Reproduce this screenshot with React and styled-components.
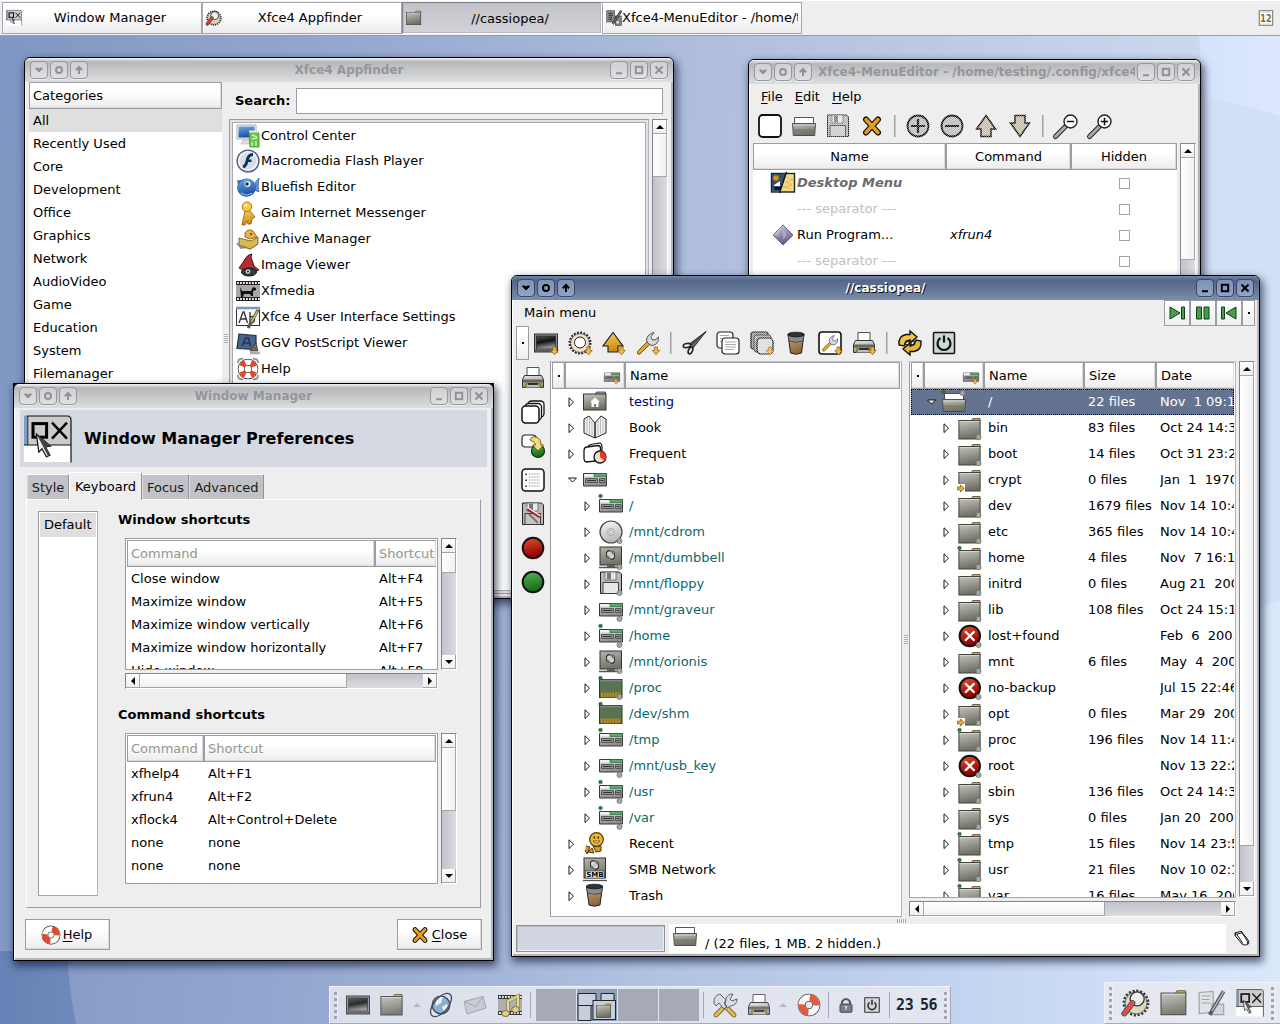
import React from "react";
import styled, { createGlobalStyle, css } from "styled-components";

const Global = createGlobalStyle`
  html, body { margin: 0; padding: 0; width: 1280px; height: 1024px; overflow: hidden; }
  *, *::before, *::after { box-sizing: border-box; }
  body { font-family: "DejaVu Sans", sans-serif; font-size: 13px; color: #000; }
  svg { display: block; flex: none; overflow: visible; }
`;

/* ---------- palette ---------- */
const line = "#9c9ca3";
const face = "#eeeeee";
const raised = "linear-gradient(#ffffff, #ffffff 35%, #ececec)";

/* ---------- gradients shared by the drawings ---------- */
const DefsSvg = styled.svg`position: absolute; width: 0; height: 0;`;
const stops = {
  folder: ["#c4c4bc", "#6f6f66"], steel: ["#e8e8e8", "#8c8c8c"], gold: ["#f8d468", "#c88a10"],
  term: ["#555", "#111", "#999"], red: ["#e8502c", "#8e0000"], green: ["#5cb858", "#186818"],
  blue: ["#6ea8e8", "#1c50a0"], tan: ["#d0a878", "#8a6440"], purple: ["#d0cce4", "#625c88"],
  disc: ["#f8f8f8", "#b8b8b8"], body: ["#b4b4aa", "#74746a"],
};
const Defs = () => (
  <DefsSvg>
    <defs>
      {Object.entries(stops).map(([id, cs]) => (
        <linearGradient key={id} id={id} x1="0" y1="0" x2="0.25" y2="1">
          {cs.map((c, i) => <stop key={c} offset={i / (cs.length - 1)} stopColor={c} />)}
        </linearGradient>
      ))}
      <pattern id="dither" width="2" height="2" patternUnits="userSpaceOnUse">
        <path d="M0 0h1v1h-1zM1 1h1v1h-1z" fill="#eee" />
      </pattern>
    </defs>
  </DefsSvg>
);

/* ---------- small drawing pieces ---------- */
const Gear = ({ fill = "#f0e0cc" }) => (
  <>
    <circle cx="12" cy="12" r="10.2" fill="none" stroke="#222" strokeWidth="2.6" strokeDasharray="1.8 1.4" />
    <circle cx="12" cy="12" r="9.4" fill={fill} stroke="#443c30" strokeWidth=".7" />
  </>
);
const DropMark = ({ x = 20, y = 20 }) => (
  <path transform={`translate(${x} ${y})`} d="M-1.6 -4h3.2v3.4h2.2l-3.8 4.4l-3.8 -4.4h2.2z" fill="#eeb84c" stroke="#8a5c08" strokeWidth=".7" />
);
const Buoy = () => (
  <>
    <circle cx="12" cy="12" r="7.3" fill="none" stroke="#333" strokeWidth="8" />
    <circle cx="12" cy="12" r="7.3" fill="none" stroke="#fff" strokeWidth="6.6" />
    <circle cx="12" cy="12" r="7.3" fill="none" stroke="#e04a24" strokeWidth="6.6" strokeDasharray="11.5 11.45" strokeDashoffset="-12" />
  </>
);
const FolderShape = () => (
  <>
    <path d="M13 4l1.500 -2.500h7.500v3h-9z" fill="#d8a850" stroke="#5c4818" strokeWidth=".8" />
    <rect x=".9" y="3.500" width="21.200" height="18.500" fill="url(#folder)" stroke="#42423c" strokeWidth="1" />
    <path d="M1.500 4.500h20" stroke="#ddd" strokeWidth=".8" />
  </>
);
const OpenShape = () => (
  <>
    <path d="M2.500 11v-7.500h19v7.500" fill="#fff" stroke="#444" strokeWidth=".9" />
    <path d="M.500 9.500h23l-.800 12h-21.400z" fill="url(#folder)" stroke="#44443c" strokeWidth=".9" />
    <path d="M1 11h22" stroke="#ccc" />
    <path d="M1.500 15h21v6h-21z" fill="#77776c" opacity=".6" />
  </>
);
const FloppyShape = ({ label = "#e6e6ea" }) => (
  <>
    <path d="M1.500 1h19l2 2v19.500h-21z" fill="#b8b8b8" stroke="#222" />
    <path d="M6 1h11v8h-11z" fill="#e8e8e8" stroke="#555" strokeWidth=".7" />
    <path d="M8 1.500h4v7h-4z" fill="#777" />
    <path d="M4 11.500h15.500v11h-15.500z" fill={label} stroke="#333" strokeWidth=".9" />
  </>
);
const PrinterShape = () => (
  <>
    <path d="M6 10v-8.500h12v8.500" fill="#fff" stroke="#555" />
    <path d="M3.500 9.500h17l2 4v8h-21v-8z" fill="url(#steel)" stroke="#333" />
    <path d="M2 13.500h20v3h-20z" fill="#666" />
    <path d="M5 21.500v-4h14v4" fill="#b8bcc4" stroke="#96802c" strokeWidth="2" />
    <path d="M7 18h10" stroke="#111" strokeWidth="1.500" />
  </>
);
const TermShape = () => (
  <>
    <rect x=".5" y="3" width="23" height="18" fill="#8a9098" stroke="#333" />
    <rect x="2.500" y="5" width="19" height="13" fill="url(#term)" stroke="#222" strokeWidth=".7" />
    <path d="M1 19.800h22" stroke="#555" strokeWidth="1.500" />
  </>
);
const WrenchShape = () => (
  <>
    <path d="M1.500 20.500l9.500 -9.500l2.500 2.500l-9.500 9.500q-3 1 -2.500 -2.500z" fill="#e6a836" stroke="#6a4808" />
    <path d="M11 11q-1.500 -3 1 -6q2.500 -3 6 -3.500l-3 4l1 3l3 .5l3.500 -3q.5 5 -3 7.500q-3 1.500 -5.500 .5z" fill="#d4d8dc" stroke="#444" strokeWidth=".9" />
  </>
);
const CrossShape = () => (
  <>
    <path d="M6 5.500l12 13M18 5.500l-12 13" stroke="#1c1400" strokeWidth="6" strokeLinecap="round" />
    <path d="M6 5.500l12 13M18 5.500l-12 13" stroke="#e6a020" strokeWidth="3.400" strokeLinecap="round" />
  </>
);
const Lens = ({ plus }) => (
  <>
    <path d="M1.500 22.500l9.500 -9.500" stroke="#222" strokeWidth="5" strokeLinecap="round" />
    <path d="M1.500 22.500l9.500 -9.500" stroke="#aaa" strokeWidth="3" strokeLinecap="round" />
    <circle cx="16.500" cy="7.500" r="6.500" fill="#fff" stroke="#222" strokeWidth="1.400" />
    <path d={plus ? "M12.800 7.500h7.400M16.500 3.800v7.400" : "M12.800 7.500h7.400"} stroke="#111" strokeWidth="1.600" />
  </>
);
const TrashShape = () => (
  <>
    <path d="M4 3h16l-2.500 19q-5.500 2.500 -11 0z" fill="url(#tan)" stroke="#222" />
    <path d="M4 3h16l-1 7q-7 2.500 -14 0z" fill="#888c90" stroke="#333" strokeWidth=".7" />
    <ellipse cx="12" cy="3.500" rx="8" ry="2.300" fill="#333" stroke="#111" strokeWidth=".8" />
  </>
);
const DriveShape = () => (
  <>
    <path d="M.500 5.500h23v12.500h-23z" fill="url(#steel)" stroke="#3a3a3a" />
    <path d="M1 6h10v2.500h-10z" fill="#f2f2f2" />
    <path d="M11 5.500h12.500v3h-12.500z" fill="#58ac68" stroke="#2c6038" strokeWidth=".6" />
    <path d="M2.500 10.500h12v4h-12zM16.500 10.500h5.500v4h-5.500z" fill="#949494" stroke="#444" strokeWidth=".8" />
    <path d="M4 12.500h9M17.500 12.500h3" stroke="#333" />
  </>
);
const Atom = () => (
  <>
    <ellipse cx="11.5" cy="9" rx="5" ry="3" transform="rotate(50 11.5 9)" fill="#ccc" stroke="#222" strokeWidth=".8" />
    <ellipse cx="11.5" cy="9" rx="5" ry="3" transform="rotate(-50 11.5 9)" fill="none" stroke="#eee" strokeWidth=".9" />
    <rect x="7.500" y="5" width="8" height="8" rx="2" fill="none" stroke="#222" strokeWidth=".8" />
  </>
);
const ScreenShape = () => (
  <>
    <rect x="1" y="1" width="21.500" height="18" fill="url(#body)" stroke="#333" />
    <Atom />
    <path d="M0 21.500h22M8 20h8" stroke="#555" strokeWidth="1.300" />
  </>
);
const WmShape = () => (
  <>
    <path d="M0 .3h21.500q2 0 2 2v21.200h-23.500z" fill="#fff" />
    <path d="M0 .3h21.500q2 0 2 2v12.700h-23.500z" fill="#cccacc" />
    <path d="M0 .3h1.600v14.700h-1.600z" fill="#7c9cc4" />
    <path d="M1.900 .5v14.500" stroke="#222" strokeWidth=".5" />
    <path d="M1.600 .5h20q1.900 0 1.900 2v21.200M0 15h23.500" fill="none" stroke="#111" strokeWidth=".6" />
    <rect x="4.500" y="4.300" width="6.800" height="6.800" fill="none" stroke="#000" strokeWidth="1.500" />
    <path d="M14 3.800l7.500 8M21.500 3.800l-7.500 8" stroke="#000" strokeWidth="1.200" />
    <path d="M6.200 9.500l7 6l-2.500 .4l2.300 4.200l-1.800 .8l-2.200 -4l-1.600 1.700z" fill="#eee" stroke="#111" strokeWidth=".6" />
    <path d="M6.400 9.700l6.800 5.800l-2.500 .4l2.300 4.200l-1 .4z" fill="#444" />
  </>
);
const PagesShape = () => (
  <>
    <rect x="1" y="1" width="16" height="16" rx="3" fill="#fff" stroke="#222" strokeWidth="1.200" />
    <path d="M4 4.500h9M4 7.500h2M4 10.500h2" stroke="#aaa" />
    <rect x="6" y="7" width="17" height="16" rx="3" fill="#fff" stroke="#222" strokeWidth="1.200" />
    <path d="M9 11h11M9 13.500h11M9 16h11M9 18.500h9" stroke="#aaa" />
  </>
);
const FilmShape = () => (
  <>
    <rect x="0" y="2" width="24" height="20" fill="#222" />
    <rect x="0" y="6" width="24" height="12" fill="#a8a8a8" />
    <path d="M1 4h23M1 20h23" stroke="#eee" strokeWidth="2" strokeDasharray="1.8 1.200" />
  </>
);
const Disabled = ({ children }) => (
  <>
    {children}
    <rect x="-1" y="-1" width="26" height="26" fill="url(#dither)" opacity=".45" />
  </>
);

/* ---------- icon set, 24 x 24 ---------- */
const drawings = {
  wm: <WmShape />,
  finder: <>
    <Gear fill="#dcd8b8" />
    <circle cx="13" cy="8.500" r="6" fill="#eee" stroke="#222" strokeWidth="1.200" />
    <path d="M9 12l-7 9" stroke="#333" strokeWidth="5" strokeLinecap="round" />
    <path d="M9 12l-7 9" stroke="#e03840" strokeWidth="3.600" strokeLinecap="round" />
  </>,
  folder: <FolderShape />,
  open: <OpenShape />,
  menued: <>
    <rect x="1" y="1" width="12" height="17" fill="#888" stroke="#555" />
    <path d="M4 5h6M4 8h6M4 11h5M4 14h5" stroke="#333" strokeWidth="1.500" />
    <rect x="14" y="9" width="9" height="14" fill="#888" stroke="#444" />
    <path d="M23 1l-13 20" stroke="#222" strokeWidth="3.500" />
    <path d="M23 1l-13 20" stroke="#ccc" strokeWidth="1" />
    <path d="M15 16h5v5h-5z" fill="#eee" stroke="#555" />
  </>,
  calendar: <>
    <rect x="2" y="1" width="20" height="22" fill="#fff" stroke="#888" strokeWidth="1.800" />
    <path d="M5 3.500h14M5 20.800h14" stroke="#aaa" strokeDasharray="1.500 1" />
    <text x="12" y="18.500" textAnchor="middle" fontSize="17" textLength="17" lengthAdjust="spacingAndGlyphs" fontWeight="bold" fontFamily="DejaVu Sans, sans-serif" fill="#8a6a20">12</text>
  </>,
  control: <>
    <path d="M1 1h19v14h-19z" fill="#f4f4f4" stroke="#aaa" />
    <path d="M2.500 2.500h16v11h-16z" fill="url(#blue)" />
    <path d="M7 16h8l2 4h-12z" fill="#ddd" stroke="#bbb" strokeWidth=".6" />
    <path d="M13 8h9l1 2v13h-9z" fill="#68c84c" stroke="#3c8c28" strokeWidth=".8" />
    <path d="M16 11l5 2M15.500 15l6 -1M16 18v4M20 17v5" stroke="#c8f0b8" strokeWidth="1.400" />
    <path d="M13 7.500h10" stroke="#eee" strokeWidth="2" />
  </>,
  flash: <>
    <circle cx="12" cy="12" r="10.800" fill="#d8dee8" stroke="#4c6484" strokeWidth="1.600" />
    <circle cx="12" cy="12" r="9.300" fill="none" stroke="#f4f6fa" strokeWidth="1.600" />
    <path d="M17 5.500q-5 0 -6 6.500q-1 5 -4 6" fill="none" stroke="#10305c" strokeWidth="3" />
    <path d="M10.500 11.800h5" stroke="#10305c" strokeWidth="2.400" />
  </>,
  fish: <>
    <path d="M17 10l6 -7q-1.500 8 0 14q-4 -1 -6 -4z" fill="#5c94d4" stroke="#2c5c9c" strokeWidth=".7" />
    <ellipse cx="10.500" cy="12.500" rx="9.500" ry="9.200" fill="url(#blue)" />
    <path d="M1 5q3 1 7 -1l-6 6z" fill="#3c70b8" />
    <circle cx="11.500" cy="9" r="3" fill="#e8f0fa" /><circle cx="11" cy="9" r="1.700" fill="#123" />
    <path d="M5 18q6 4 11 0" stroke="#9cbce4" strokeWidth="1.200" fill="none" />
  </>,
  gaim: <>
    <path d="M9 10q5 -1 6 1l4 5l-3 2l-1 5h-3l-1 -3l-2 4h-3z" fill="url(#gold)" stroke="#9c6808" strokeWidth=".9" />
    <circle cx="11" cy="5.800" r="4.800" fill="#fcc83c" stroke="#a87008" strokeWidth=".9" />
    <circle cx="9.800" cy="4.300" r="1.600" fill="#fff0b0" />
  </>,
  archive: <>
    <path d="M3 20l12 3l8 -6l-10 -3z" fill="#bbb" opacity=".7" />
    <path d="M3 11l12 3l7 -4v7l-8 5l-11 -4z" fill="#d8b850" stroke="#6c5010" strokeWidth=".8" />
    <path d="M9 6q3 -5 8 -2l4 6l-7 2l-5 -2z" fill="#ecb040" stroke="#7c4c08" strokeWidth=".8" />
    <path d="M1 16l4 5l5 -1" fill="none" stroke="#888" strokeWidth="1.800" /><circle cx="15" cy="7" r="1" fill="#333" />
  </>,
  gnomeEye: <>
    <path d="M3 15q3 -4 6 -9q3 -5 7 -5l-1 3l3 9l5 4q-10 5 -20 -2z" fill="#b02c30" stroke="#480c10" strokeWidth=".9" />
    <ellipse cx="13" cy="19" rx="7.500" ry="4" fill="#333c40" stroke="#111" />
    <circle cx="12" cy="18.500" r="2.300" fill="#c8e0e8" /><circle cx="12" cy="18.500" r="1" fill="#111" />
  </>,
  film: <>
    <FilmShape />
    <path d="M4 8l2 4h9l2 -4l3 1v2l-3 1v5h-2l-1 -2h-6l-1 3h-2z" fill="#111" />
  </>,
  ui: <>
    <rect x=".5" y="3.500" width="23" height="17" fill="#f8f8f8" stroke="#333" />
    <path d="M0 3h24" stroke="#7898c4" strokeWidth="2.500" />
    <path d="M3 18l4 -11h1l3.500 11M4.500 14h5.500M14 7v11M14 12q5 -2 4.500 2.500q0 4 -4.500 3" fill="none" stroke="#333" strokeWidth="1.300" />
    <path d="M22 5l-10 18" stroke="#555" strokeWidth="3" /><path d="M21.500 6l-6 11" stroke="#d8c058" strokeWidth="1.500" />
  </>,
  ggv: <>
    <path d="M3 3l17 1.500v14l-19 -1z" fill="#46648c" stroke="#1c2c44" strokeWidth="1.200" />
    <path d="M6 15l3.500 -8h3l2 8M8 12h6" stroke="#22364e" strokeWidth="1.600" fill="none" />
    <path d="M17 15l3 -3l2 8h-8z" fill="#786450" stroke="#333" strokeWidth=".7" /><path d="M14 22h10" stroke="#aaa" strokeWidth="2.500" />
  </>,
  buoyBig: <>
    <path d="M2 6q0 -5 5 -4M22 6q0 -5 -5 -4M2 18q0 5 5 4M22 18q0 5 -5 4" stroke="#a09890" fill="none" strokeWidth="2" />
    <circle cx="12" cy="12" r="6.800" fill="none" stroke="#333" strokeWidth="7" />
    <circle cx="12" cy="12" r="6.800" fill="none" stroke="#fff" strokeWidth="5.600" />
    <circle cx="12" cy="12" r="6.800" fill="none" stroke="#e04a24" strokeWidth="5.600" strokeDasharray="5 5.680" strokeDashoffset="-2.800" />
  </>,
  buoy: <Buoy />,
  page: <rect x="1" y="1" width="22" height="22" rx="3.500" fill="#fff" stroke="#111" strokeWidth="1.800" />,
  floppyOff: <Disabled><FloppyShape label="#ccc" /></Disabled>,
  cross: <CrossShape />,
  plusOff: <Disabled><circle cx="12" cy="12" r="10.500" fill="#bcbcbc" stroke="#000" strokeWidth="1.800" /><path d="M5 12h14M12 5v14" stroke="#000" strokeWidth="2.200" /></Disabled>,
  minusOff: <Disabled><circle cx="12" cy="12" r="10.500" fill="#bcbcbc" stroke="#000" strokeWidth="1.800" /><path d="M5 12h14" stroke="#000" strokeWidth="2.200" /></Disabled>,
  upOff: <Disabled><path d="M12 1.500l9.500 13.500h-4.500v7.500h-10v-7.500h-4.500z" fill="#ccbc9c" stroke="#000" strokeWidth="1.500" /></Disabled>,
  downOff: <Disabled><path d="M12 22.500l9.500 -13.500h-4.500v-7.500h-10v7.500h-4.500z" fill="#ccbc9c" stroke="#000" strokeWidth="1.500" /></Disabled>,
  zoomOut: <Lens />, zoomIn: <Lens plus />,
  desktop: <>
    <rect x=".5" y="2.500" width="23" height="18.500" fill="#f4d98c" stroke="#222" strokeWidth="1.400" />
    <path d="M1 3h14l-6 17.500h-8z" fill="#34506c" />
    <circle cx="5" cy="7" r="2.800" fill="#d89010" /><path d="M3 14l6 -4v5h-6z" fill="#fff" />
    <path d="M3 16h8l-3 3h-4z" fill="#111" /><path d="M15.500 1l-7 21" stroke="#111" strokeWidth="1.400" />
    <path d="M15 6l7 3l-8 2l7 3l-9 2l8 2" stroke="#e0bc58" fill="none" />
  </>,
  diamond: <>
    <path d="M12 2l10 10l-10 10l-10 -10z" fill="url(#purple)" stroke="#4c4868" strokeWidth=".8" />
    <path d="M12 2l-10 10l5 1zM12 7l4 5l-4 5" fill="#fff" opacity=".25" />
  </>,
  term: <TermShape />,
  termDrop: <><TermShape /><DropMark x={20.5} /></>,
  gearDrop: <><Gear /><circle cx="12" cy="11.500" r="5.500" fill="#fff" stroke="#222" /><DropMark x={20.5} /></>,
  homeDrop: <><path d="M11 1.500l10 13.500h-5v6h-10v-6h-5z" fill="url(#gold)" stroke="#222" strokeWidth="1.200" /><DropMark x={19.5} /></>,
  wrenchDrop: <><WrenchShape /><DropMark /></>,
  scissors: <>
    <path d="M24 .5l-14 13.500l-2 -1.500z" fill="#555" stroke="#111" strokeWidth=".8" /><path d="M24 .5l-12.500 16l-2 -2" stroke="#111" fill="#666" strokeWidth=".8" />
    <ellipse cx="5" cy="14.500" rx="3.800" ry="2" transform="rotate(-8 5 14.500)" fill="none" stroke="#222" strokeWidth="1.600" />
    <ellipse cx="8.500" cy="19.500" rx="2" ry="3.600" transform="rotate(25 8.500 19.500)" fill="none" stroke="#222" strokeWidth="1.600" />
  </>,
  copy: <PagesShape />,
  pasteOff: <Disabled><rect x="1" y="1" width="17" height="17" rx="2" fill="#999" stroke="#000" strokeWidth="1.200" /><rect x="4" y="4" width="17" height="17" rx="2" fill="#aaa" stroke="#333" /><rect x="7" y="7" width="16" height="16" rx="4" fill="#ddd" stroke="#000" strokeWidth="1.200" /><DropMark x={20} /></Disabled>,
  trash: <TrashShape />,
  wrenchBox: <>
    <rect x="1" y="1" width="22" height="22" rx="3" fill="#fff" stroke="#111" strokeWidth="1.600" />
    <g transform="translate(3.500 3.500) scale(.72)"><WrenchShape /></g><DropMark x={20.5} />
  </>,
  printDrop: <><PrinterShape /><DropMark x={20.5} /></>,
  print: <PrinterShape />,
  sync: <>
    <path d="M1 14q-1 -9 7 -10.500h4v-3.500l7 6l-7 6v-3q-4 0 -6 6z" fill="#f0c448" stroke="#111" strokeWidth="1.400" />
    <path d="M23 10q1 9 -7 10.500h-4v3.500l-7 -6l7 -6v3q4 0 6 -6z" fill="#e8b438" stroke="#111" strokeWidth="1.400" />
    <circle cx="9.300" cy="12" r="2" fill="none" stroke="#222" strokeWidth="1.400" /><circle cx="14.700" cy="12" r="2" fill="none" stroke="#222" strokeWidth="1.400" />
  </>,
  power: <>
    <rect x="1.500" y="1.500" width="21" height="21" rx="1" fill="#cdd8d0" stroke="#111" strokeWidth="1.500" />
    <path d="M8.500 7a6.500 6.500 0 1 0 7 0M12 4.500v7" fill="none" stroke="#111" strokeWidth="2.200" />
  </>,
  stack: <>
    <rect x="7" y="1" width="16" height="16" rx="3.500" fill="#fff" stroke="#111" strokeWidth="1.300" />
    <rect x="4" y="3.500" width="16.500" height="16.500" rx="3.500" fill="#fff" stroke="#111" strokeWidth="1.300" />
    <rect x="1" y="6" width="17" height="17" rx="3.500" fill="#fff" stroke="#111" strokeWidth="1.500" />
  </>,
  goto: <>
    <rect x="1" y="1" width="14" height="12" rx="3" fill="#fff" stroke="#222" strokeWidth="1.200" />
    <circle cx="17" cy="17" r="6.500" fill="url(#green)" stroke="#0c300c" strokeWidth="1.200" />
    <path d="M9 6q1 -4 6 -3q5 1 5 8h2.500l-5.500 6l-5.500 -6h3q0 -3 -5.500 -5z" fill="#f4dc78" stroke="#6c5008" strokeWidth=".9" />
  </>,
  list: <>
    <rect x="1" y="1" width="22" height="22" rx="3.500" fill="#fff" stroke="#111" strokeWidth="1.500" />
    <path d="M8 6h11M8 9h11M8 12h11M8 15h11M8 18h11" stroke="#999" strokeDasharray="1 .6" />
    <path d="M5 5.500v1.500M5 11.500v1.500M5 17.500v1.500" stroke="#111" strokeWidth="1.400" />
  </>,
  saveEdit: <><FloppyShape label="#c4c4c4" /><path d="M8 12l9 9" stroke="#777" strokeWidth="2" /><path d="M6 6l13 8.500" stroke="#fff" strokeWidth="2.600" /><path d="M6 7l13 8.500" stroke="#b01820" strokeWidth="2" /></>,
  ballRed: <><circle cx="12" cy="12" r="10.300" fill="url(#red)" stroke="#111" strokeWidth="2" /></>,
  ballGreen: <><circle cx="12" cy="12" r="10.300" fill="url(#green)" stroke="#111" strokeWidth="2" /></>,
  globe: <>
    <circle cx="12" cy="12" r="8.800" fill="#86a8cc" stroke="#1c2c44" strokeWidth="1.200" />
    <path d="M6 7q4 -4 8 -3l-2 6l-5 3zM13 14l5 -3l1 4l-4 4z" fill="#eef4fa" />
    <ellipse cx="12" cy="12" rx="14" ry="7" transform="rotate(-50 12 12)" fill="none" stroke="#2c3848" strokeWidth="1.300" />
  </>,
  mail: <><path d="M1 8.500l19 -5l3 11.500l-19 6z" fill="#c4c8d0" stroke="#9a9ea6" /><path d="M1 8.500l12 5l7 -10" fill="none" stroke="#9a9ea6" /></>,
  music: <><FilmShape /><path d="M10 20v-12l10 -5v13" fill="none" stroke="#8c7828" strokeWidth="3.500" /><path d="M10 20v-12l10 -5v13" fill="none" stroke="#e8d888" strokeWidth="2" /><ellipse cx="7.500" cy="20.500" rx="3.800" ry="3" fill="#e0cc78" stroke="#6c5c20" /><ellipse cx="17.500" cy="16.500" rx="3.800" ry="3" fill="#e0cc78" stroke="#6c5c20" /></>,
  tools: <>
    <path d="M3 22l8 -8M13 14l8 8" stroke="#6c5010" strokeWidth="4.600" strokeLinecap="round" />
    <path d="M3 22l8 -8M13 14l8 8" stroke="#e8b848" strokeWidth="3" strokeLinecap="round" />
    <path d="M1 10q-1 -7 6 -9l6 6l-2 3l3 3l-3 3l-5 -6l-3 3zM13 6q1 -5 7 -5l-3 5l2 2l5 -2q0 6 -6 7l-4 2l-2 -3z" fill="#d8dce4" stroke="#444" strokeWidth=".9" />
  </>,
  lock: <><path d="M6 12v-5q6 -8 12 0v5" fill="none" stroke="#444" strokeWidth="3" /><rect x="3" y="10.500" width="18" height="12.500" rx="2" fill="#6c7078" stroke="#2c2c30" strokeWidth="1.400" /><path d="M12 14v5M10 14.500h4" stroke="#ddd" strokeWidth="2" /></>,
  powerSmall: <><rect x="1" y="1" width="22" height="22" rx="1" fill="#d0d4dc" stroke="#444" strokeWidth="2" /><path d="M8.500 8a6 6 0 1 0 7 0M12 4v8" fill="none" stroke="#222" strokeWidth="2.500" /></>,
  eraser: <path d="M3 5l8 -2l10 13q1 5 -3 5q-4 1 -6 -1l-9 -11zM3 5v4M11 3l1 2l-8 2M12 5l7 11q1 3 0 4M5 7l8 12" fill="#fff" stroke="#111" strokeWidth="1.300" />,
  driveDrop: <><g transform="translate(0 2)"><DriveShape /></g><DropMark x={18} y={20.5} /></>,
  editor: <><path d="M1 3l12 -1v18l-12 1z" fill="#e0e2e8" stroke="#999" /><path d="M12 13h10v9h-10z" fill="#d0d2d8" stroke="#999" /><path d="M3 6h8M3 9h7M3 12h8" stroke="#999" /><path d="M22 2l-12 20" stroke="#444" strokeWidth="3.200" /><path d="M22 2l-10 17" stroke="#bbb" /></>,
};
const Icon = ({ name, size = 24 }) => (
  <svg width={size} height={size} viewBox="0 0 24 24">{drawings[name]}</svg>
);

/* ---------- file tree icons, 26 x 26 with emblems ---------- */
const treeDrawings = {
  folder: <g transform="translate(1 2)"><FolderShape /></g>,
  open: <g transform="translate(1 1)"><OpenShape /></g>,
  homeFolder: <g transform="translate(1 3)"><path d="M12 3l1.500 -3h9v4" fill="#8ca8c8" stroke="#334" strokeWidth=".8" /><rect x=".5" y="2" width="22.500" height="16" fill="url(#folder)" stroke="#333" /><path d="M7 10l5 -4.500l5 4.500h-1.500v5h-2.500v-3h-2v3h-2.500v-5z" fill="#fff" /></g>,
  book: <g transform="translate(1 0)"><path d="M1 4l5 -3l6 7v15l-11 -5zM23 4l-5 -3l-6 7v15l11 -5z" fill="#f0f0f0" stroke="#222" /><path d="M4 3v15M6.500 3v16M9 6v14M20 3v15M17.500 3v16M15 6v14" stroke="#bbb" /></g>,
  frequent: <g transform="translate(1 2)"><path d="M5 4q0 -2 3 -2.500l8 -1.500q3 0 3 4v12h-10z" fill="#fff" stroke="#111" strokeWidth="1.200" /><path d="M1 8q0 -4 3 -4l11 -1.500q2.500 0 2.500 3v12l-14 1.500q-2 0 -2.500 -3z" fill="#fff" stroke="#111" strokeWidth="1.300" /><circle cx="17" cy="14" r="6" fill="#f4dcc8" stroke="#111" strokeWidth="1.300" /><path d="M17 14v-6a6 6 0 0 1 4.500 10z" fill="#e83c20" /></g>,
  drive: <g transform="translate(1 1)"><DriveShape /></g>,
  disc: <g transform="translate(1 0)"><circle cx="12" cy="13" r="11" fill="url(#disc)" stroke="#444" strokeWidth="1.200" /><circle cx="12" cy="13" r="3.500" fill="#ddd" stroke="#999" strokeWidth=".8" /><circle cx="12" cy="13" r="1.500" fill="#fff" stroke="#888" strokeWidth=".6" /></g>,
  screen: <g transform="translate(1 1)"><ScreenShape /></g>,
  floppy: <g transform="translate(1 0)"><FloppyShape /></g>,
  ram: <g transform="translate(1 0)"><rect x=".5" y="4.500" width="22.500" height="18" fill="#587450" stroke="#2c3c2c" /><path d="M1 5.500h21.500" stroke="#888" strokeWidth="1.500" /><path d="M2 20h20" stroke="#c08818" strokeWidth="5" strokeDasharray="2 .8" /></g>,
  recent: <g transform="translate(1 1)"><path d="M3 14l4 1l-3 7l-2 -4M10 14h8v5l-5 1zM5 20l4 -4l2 5z" fill="#d89c18" stroke="#4c3404" /><circle cx="13.500" cy="7.500" r="6.800" fill="#f4b424" stroke="#4c3404" strokeWidth="1.200" /><path d="M10 9q3.500 4 7 0z" fill="#fff" stroke="#333" strokeWidth=".7" /><path d="M11.300 4.500v2M15.300 4.500v2" stroke="#222" strokeWidth="1.500" /></g>,
  smb: <g transform="translate(1 1)"><rect x="1" y="0" width="21.500" height="20" fill="url(#body)" stroke="#333" /><g transform="translate(0 -2)"><Atom /></g><rect x="2.500" y="13" width="18.500" height="7" fill="#eee" stroke="#333" strokeWidth=".6" /><text x="11.800" y="19.300" fontSize="7" fontWeight="bold" textAnchor="middle" fontFamily="DejaVu Sans, sans-serif">SMB</text><path d="M0 22.500h24" stroke="#555" strokeWidth="1.300" /></g>,
  trash: <g transform="translate(.5 0)"><TrashShape /></g>,
  stop: <g transform="translate(.8 1)"><circle cx="12" cy="12" r="10.200" fill="url(#red)" stroke="#111" strokeWidth="2" /><path d="M8 8l8 8M16 8l-8 8" stroke="#fff" strokeWidth="2.400" strokeLinecap="round" /></g>,
};
const Ring = ({ y }) => (
  <>
    <circle cx="21.500" cy={y} r="2.500" fill="#c4c8c4" stroke="#6a726a" strokeWidth=".9" />
    <circle cx="21.500" cy={y} r="1" fill="#eee" stroke="#555" strokeWidth=".6" />
  </>
);
const TreeIcon = ({ name, marks = "" }) => (
  <svg width="26" height="26" viewBox="0 0 26 26">
    {treeDrawings[name]}
    {marks.includes("r") && <Ring y={22} />}
    {marks.includes("t") && <Ring y={4} />}
    {marks.includes("d") && <circle cx="2.500" cy="3" r="1.800" fill="#2c8034" stroke="#14501c" strokeWidth=".5" />}
    {marks.includes("l") && <><rect x="0" y="17" width="8" height="8" fill="#fff" /><path d="M.5 20h3v-2l4 3.500l-4 3.500v-2h-3z" fill="#e4b040" stroke="#7c5408" strokeWidth=".7" /></>}
  </svg>
);

/* ---------- wallpaper ---------- */
const Desktop = styled.div`
  position: relative; width: 1280px; height: 1024px; overflow: hidden;
  white-space: nowrap; cursor: default; background: #aebcdc;
`;
const Paper = styled.svg`position: absolute; inset: 0;`;
const Wallpaper = () => (
  <Paper width="1280" height="1024" viewBox="0 0 1280 1024">
    <defs>
      <linearGradient id="sky" x1="0" x2="1" y1="0" y2=".04">
        <stop offset="0" stopColor="#8097c3" /><stop offset=".25" stopColor="#93a6cf" />
        <stop offset=".55" stopColor="#afbedd" /><stop offset=".93" stopColor="#cbd7ec" /><stop offset="1" stopColor="#d3e0f5" />
      </linearGradient>
      <linearGradient id="glow" x1="0" x2="1"><stop offset="0" stopColor="#d5e2fb" /><stop offset="1" stopColor="#dde8ff" /></linearGradient>
      <linearGradient id="deep" x1="0" x2="1"><stop offset="0" stopColor="#6682b6" /><stop offset="1" stopColor="#6f8abc" /></linearGradient>
      <linearGradient id="low" x1="0" x2="1"><stop offset="0" stopColor="#a8bbe0" stopOpacity="0" /><stop offset=".6" stopColor="#c0d2ef" /><stop offset="1" stopColor="#dbe8fb" /></linearGradient>
    </defs>
    <rect width="1280" height="1024" fill="url(#sky)" />
    <path d="M400 1024Q480 900 700 820L1280 600V1024z" fill="url(#low)" />
    <path d="M1199 36H1280V116Q1240 104 1204 98z" fill="url(#glow)" />
    <path d="M1200 97Q1240 104 1280 116V600H1200z" fill="#d2dff4" />
    <path d="M0 951H67Q69 990 76 1024H0z" fill="url(#deep)" />
  </Paper>
);

/* ---------- task bar ---------- */
const TaskBar = styled.div`
  position: absolute; inset: 0 0 auto 0; height: 36px; display: flex; align-items: flex-start; padding: 2px 0 0 2px;
  background: ${face}; border-bottom: 1px solid ${line}; box-shadow: inset 0 1px #fff;
`;
const Task = styled.div`
  width: 200px; height: 32px; display: flex; align-items: center; padding: 0 3px;
  border: 1px solid ${line}; border-color: ${p => p.$on ? "#84848e #fff #fff #84848e" : "#a6a6ac"};
  background: ${p => p.$on ? "linear-gradient(#c3c4ca, #d2d3d8)" : raised};
  box-shadow: ${p => p.$on ? "inset 0 0 0 1px #b8b9c0" : "inset 1px 1px #fff"};
`;
const TaskText = styled.span`flex: 1; text-align: center; overflow: hidden; padding-bottom: ${p => p.$on ? 0 : 1}px;`;
const Spring = styled.div`flex: 1;`;
const TrayIcon = styled.div`padding: 8px 6px;`;

/* ---------- window frame ---------- */
const Frame = styled.section`
  position: absolute; left: ${p => p.$x}px; top: ${p => p.$y}px; width: ${p => p.$w}px; height: ${p => p.$h}px;
  display: flex; flex-direction: column; overflow: hidden; border: 1px solid #000;
  border-radius: ${p => p.$square ? 0 : "6px 6px 0 0"};
  background: ${p => p.$square ? `linear-gradient(#000 10px, ${face} 10px)` : face};
  box-shadow: 2px 4px 8px 1px rgba(10, 20, 50, .65);
  &::after { content: ""; position: absolute; inset: 24px 0 0 0; pointer-events: none;
    box-shadow: inset 1px 0 #fff, inset -2px -2px #b4b4b8; }
`;
const TitleBar = styled.header`
  flex: none; height: 24px; display: flex; align-items: center; gap: 2px; padding: 0 5px; border-radius: 5px 5px 0 0;
  background: ${p => p.$active
    ? "linear-gradient(#7485a3, #54678a 18%, #5f7091 45%, #7d8da9)"
    : "linear-gradient(#f4f4f4, #b6b7b9 16%, #c6c7c9 50%, #dcdddf)"};
`;
const TitleText = styled.h1`
  flex: 1; margin: 0 ${p => p.$long ? 0 : 4}px 0 4px; overflow: hidden; text-align: center; font-size: 12px; line-height: 20px; font-weight: bold;
  color: ${p => p.$active ? "#fff" : "#94969b"}; text-shadow: ${p => p.$active ? "1px 1px #111" : "none"};
`;
const WinButton = styled.span`
  width: 18px; height: 18px; display: grid; place-items: center; border-radius: 4px; flex: none;
  border: 1px solid ${p => p.$active ? "#35466a" : "#97989c"};
  background: ${p => p.$active ? "linear-gradient(#7f92b6, #92a3c4)" : "linear-gradient(#cfd0d2, #dfe0e2)"};
  box-shadow: ${p => p.$active ? "0 1px #8c9cb8" : "0 1px #eee"};
`;
const winGlyph = {
  menu: <path d="M1.500 3.500l3.500 3.500l3.500 -3.500v-.5h-2l-1.500 1l-1.500 -1h-2z" fill="currentColor" strokeWidth="1" />,
  stick: <circle cx="5" cy="5" r="3" fill="none" />,
  shade: <path d="M5 9v-6M1.800 5.200l3.200 -3.200l3.200 3.200" fill="none" />,
  min: <path d="M2 8.200h6" />,
  max: <rect x="1.800" y="1.800" width="6.400" height="6.400" fill="none" />,
  close: <path d="M1.500 1.500l7 7M8.500 1.500l-7 7" />,
};
const Glyph = styled.svg`color: ${p => p.$active ? "#000" : "#909298"}; stroke: currentColor; stroke-width: 2;`;
const WinBtn = ({ kind, active }) => (
  <WinButton $active={active}><Glyph $active={active} width="10" height="10" viewBox="0 0 10 10">{winGlyph[kind]}</Glyph></WinButton>
);
const Window = ({ x, y, w, h, title, active, square, children }) => (
  <Frame $x={x} $y={y} $w={w} $h={h} $square={square}>
    <TitleBar $active={active}>
      {["menu", "stick", "shade"].map(k => <WinBtn key={k} kind={k} active={active} />)}
      <TitleText $active={active} $long={title.length > 30}>{title}</TitleText>
      {["min", "max", "close"].map(k => <WinBtn key={k} kind={k} active={active} />)}
    </TitleBar>
    {children}
  </Frame>
);

/* ---------- shared widgets ---------- */
const HeadCell = styled.div`
  width: ${p => p.$w ? p.$w + "px" : "auto"}; flex: ${p => p.$w ? "none" : "1"}; height: 27px; line-height: 25px;
  padding: 0 ${p => p.$pad || 3}px; border: 1px solid ${line}; background: ${raised}; color: ${p => p.$dim ? "#96968f" : "#000"};
  text-align: ${p => p.$align || "left"}; overflow: hidden; box-shadow: inset -1px -1px #dadada;
  border-right-width: ${p => p.$cut ? 0 : 1}px;
`;
const HeadStrip = styled.div`display: flex; flex: none;`;
const Track = styled.div`
  flex: none; display: flex; flex-direction: ${p => p.$h ? "row" : "column"};
  ${p => p.$h ? css`height: 16px; background: linear-gradient(#c2c3ca, #dadbe0);` : css`width: 16px; background: linear-gradient(90deg, #c2c3ca, #dadbe0);`}
  border: 1px solid; border-color: #85858f #fff #fff #85858f;
`;
const ArrowBox = styled.div`
  width: 14px; height: 14px; flex: none; display: grid; place-items: center; background: linear-gradient(#fff, #eee);
  box-shadow: inset -1px -1px #a4a4aa;
`;
const Thumb = styled.div`
  flex: none; ${p => p.$h ? "width" : "height"}: ${p => p.$size}px; box-shadow: inset -1px -1px #a4a4aa, inset 1px 1px #fff;
  background: ${p => p.$h ? "linear-gradient(#fff, #f0f0f0)" : "linear-gradient(90deg, #fff, #f0f0f0)"};
`;
const arrows = { up: "M0 6l4 -4l4 4z", down: "M0 2l4 4l4 -4z", left: "M6 0l-4 4l4 4z", right: "M2 0l4 4l-4 4z" };
const Arrow = ({ dir }) => <ArrowBox><svg width="8" height="8"><path d={arrows[dir]} /></svg></ArrowBox>;
const Scroll = ({ horizontal, thumb }) => (
  <Track $h={horizontal}>
    <Arrow dir={horizontal ? "left" : "up"} />
    <Thumb $h={horizontal} $size={thumb} />
    <Spring />
    <Arrow dir={horizontal ? "right" : "down"} />
  </Track>
);
const Sunken = styled.div`
  border: 1px solid #9a9aa2; border-right-color: #b4b4ba; border-bottom-color: #a6a6ac; background: #fff; overflow: hidden;
`;
const Slot = styled.div`width: 34px; height: 34px; flex: none; display: grid; place-items: center;`;
const Divider = styled.div`
  flex: none; width: 2px; height: 22px; margin: 0 5px; background: #a4a4a8; border-right: 1px solid #c8c8c8;
`;
const Tools = styled.div`display: flex; align-items: center; height: 34px; flex: none; padding-left: ${p => p.$pad}px;`;
const ToolRow = ({ names }) => names.map((n, i) => n === "|" ? <Divider key={i} /> : <Slot key={i}><Icon name={n} /></Slot>);
const U = styled.u`text-underline-offset: 2px;`;
const Gap = styled.div`width: ${p => p.$w || 0}px; height: ${p => p.$h || 0}px; flex: none;`;

/* ---------- Appfinder ---------- */
const Finder = styled.div`flex: 1; min-height: 0; display: flex; padding: 0 5px 4px 4px;`;
const Cats = styled.div`width: 193px; background: #fff;`;
const Cat = styled.div`height: 23px; line-height: 23px; padding-left: 4px; background: ${p => p.$on ? "#dfdfdf" : "#fff"};`;
const Grip = styled.div`
  display: flex; align-items: center; justify-content: center; flex: none; width: 7px;
  &::after { content: ""; width: 4px; height: 9px; background: repeating-linear-gradient(#aaa 0 1px, #f8f8f8 1px 2px); }
`;
const Results = styled.div`flex: 1; display: flex; flex-direction: column; min-width: 0; min-height: 0;`;
const ResultBody = styled.div`flex: 1; display: flex; min-height: 0;`;
const AppList = styled(Sunken)`
  flex: 1; padding: 3px; border-bottom-color: #9a9aa2;
  box-shadow: inset 0 0 0 2px #e2e2e4, inset 0 0 0 3px #a8a8ae;
`;
const Search = styled.div`display: flex; gap: 6px; padding: 6px 5px 0 6px; height: 37px; align-items: flex-start; line-height: 25px;`;
const SearchLabel = styled.b`width: 55px;`;
const Field = styled.div`flex: 1; height: 26px; background: #fff; border: 1px solid ${line};`;
const AppRow = styled.div`display: flex; align-items: center; gap: 1px; height: 26px; padding-left: 3px; line-height: 26px; &:first-child { height: 25px; }`;

const cats = ["All", "Recently Used", "Core", "Development", "Office", "Graphics", "Network", "AudioVideo", "Game", "Education", "System", "Filemanager"];
const apps = [
  ["control", "Control Center"], ["flash", "Macromedia Flash Player"], ["fish", "Bluefish Editor"], ["gaim", "Gaim Internet Messenger"],
  ["archive", "Archive Manager"], ["gnomeEye", "Image Viewer"], ["film", "Xfmedia"], ["ui", "Xfce 4 User Interface Settings"],
  ["ggv", "GGV PostScript Viewer"], ["buoyBig", "Help"],
];
const Appfinder = () => (
  <Window x={24} y={57} w={650} h={542} title="Xfce4 Appfinder">
    <Finder>
      <Cats>
        <HeadCell>Categories</HeadCell>
        {cats.map((c, i) => <Cat key={c} $on={i === 0}>{c}</Cat>)}
      </Cats>
      <Grip />
      <Results>
        <Search><SearchLabel>Search:</SearchLabel><Field /></Search>
        <ResultBody>
          <AppList>{apps.map(([icon, name]) => <AppRow key={name}><Icon name={icon} />{name}</AppRow>)}</AppList>
          <Gap $w={3} />
          <Scroll thumb={43} />
        </ResultBody>
      </Results>
    </Finder>
  </Window>
);

/* ---------- menu editor ---------- */
const Menus = styled.nav`display: flex; gap: 12px; height: 25px; line-height: 25px; padding-left: 12px; flex: none;`;
const EditorBody = styled.div`display: flex; flex: 1; min-height: 0; padding: 0 3px 0 4px;`;
const EdTable = styled.div`width: 424px; background: #fff; flex: none;`;
const EdRow = styled.div`
  display: grid; grid-template-columns: 18px 26px 149px 1fr 107px; align-items: center; height: 26px; line-height: 26px;
  color: ${p => p.$tone || "#000"};
`;
const EdName = styled.span`font-weight: ${p => p.$bold ? "bold" : "normal"}; font-style: ${p => p.$bold ? "italic" : "normal"};`;
const EdCmd = styled.em`padding-left: 4px;`;
const Check = styled.i`width: 11px; height: 11px; border: 1px solid #a4a4aa; background: #fff; margin-left: 49px;`;
const edRows = [
  { icon: "desktop", name: "Desktop Menu", bold: true, tone: "#6c6c6c" }, { name: "--- separator ---", tone: "#c0c0c0" },
  { icon: "diamond", name: "Run Program...", cmd: "xfrun4" }, { name: "--- separator ---", tone: "#c0c0c0" },
];
const MenuEditor = () => (
  <Window x={748} y={59} w={453} h={420} title="Xfce4-MenuEditor - /home/testing/.config/xfce4">
    <Menus><span><U>F</U>ile</span><span><U>E</U>dit</span><span><U>H</U>elp</span></Menus>
    <Tools $pad={4}>
      <ToolRow names={["page", "open", "floppyOff", "cross", "|", "plusOff", "minusOff", "upOff", "downOff", "|", "zoomOut", "zoomIn"]} />
    </Tools>
    <EditorBody>
      <EdTable>
        <HeadStrip>
          <HeadCell $w={193} $align="center">Name</HeadCell><HeadCell $w={125} $align="center">Command</HeadCell><HeadCell $align="center">Hidden</HeadCell>
        </HeadStrip>
        {edRows.map((r, i) => (
          <EdRow key={i} $tone={r.tone}>
            <span />{r.icon ? <Icon name={r.icon} /> : <span />}
            <EdName $bold={r.bold}>{r.name}</EdName><EdCmd>{r.cmd}</EdCmd><Check />
          </EdRow>
        ))}
      </EdTable>
      <Gap $w={3} />
      <Scroll thumb={102} />
    </EditorBody>
  </Window>
);

/* ---------- window manager preferences ---------- */
const Banner = styled.div`
  display: flex; align-items: center; gap: 12px; height: 57px; margin: 2px 6px 0; padding-left: 4px; background: #d5d9e2; flex: none;
`;
const BannerTitle = styled.h2`margin: 0; font-size: 16px; line-height: 56px;`;
const Tabs = styled.div`display: flex; align-items: flex-end; height: 32px; padding-left: 13px; flex: none;`;
const Tab = styled.div`
  height: ${p => p.$on ? 28 : 25}px; line-height: ${p => p.$on ? 27 : 25}px; width: ${p => p.$w}px; text-align: center;
  margin-bottom: ${p => p.$on ? -1 : 0}px; z-index: ${p => p.$on ? 1 : 0}; color: ${p => p.$on ? "#000" : "#1c1c1c"};
  background: ${p => p.$on ? face : "#c1c2c8"}; border: 1px solid; border-bottom: 0;
  border-color: #fff #92929a #fff ${p => p.$on ? "#fff" : "#dcdce0"};
`;
const Sheet = styled.div`
  height: 409px; margin: 0 12px; padding: 11px; display: flex; border: 1px solid; border-color: #fff ${line} ${line} #fff; flex: none;
`;
const Themes = styled(Sunken)`width: 60px; height: 385px; padding: 1px;`;
const Theme = styled.div`height: 24px; line-height: 24px; padding-left: 4px; background: #dfdfdf;`;
const Keys = styled.div`flex: 1; padding-left: 20px; display: flex; flex-direction: column;`;
const Heading = styled.h3`margin: 0; font-size: 13px; line-height: 17px; height: ${p => p.$h}px; padding-top: ${p => p.$top}px;`;
const TableBox = styled.div`display: flex; gap: 3px; height: ${p => p.$h}px; padding-left: 7px;`;
const KeyTable = styled(Sunken)`width: 313px; padding: 1px; border-color: ${line};`;
const KeyRow = styled.div`display: grid; grid-template-columns: ${p => p.$first}px 1fr; height: 23px; line-height: 23px; padding-left: 4px;`;
const Under = styled.div`padding: 3px 0 0 7px; width: 320px;`;
const Actions = styled.div`display: flex; justify-content: space-between; padding: 11px 11px 0;`;
const PushButton = styled.div`
  width: 85px; height: 31px; display: flex; align-items: center; justify-content: center; gap: 2px; line-height: 29px; padding-right: 2px;
  border: 1px solid ${line}; background: ${raised}; box-shadow: inset -1px -1px #dcdcdc;
`;
const winKeys = [["Close window", "Alt+F4"], ["Maximize window", "Alt+F5"], ["Maximize window vertically", "Alt+F6"], ["Maximize window horizontally", "Alt+F7"], ["Hide window", "Alt+F8"]];
const cmdKeys = [["xfhelp4", "Alt+F1"], ["xfrun4", "Alt+F2"], ["xflock4", "Alt+Control+Delete"], ["none", "none"], ["none", "none"]];
const KeyList = ({ first, rows, cut }) => (
  <KeyTable>
    <HeadStrip>
      <HeadCell $w={first} $dim>Command</HeadCell><HeadCell $dim $cut={cut}>Shortcut</HeadCell>
    </HeadStrip>
    {rows.map(([a, b], i) => <KeyRow key={i} $first={first}><span>{a}</span><span>{b}</span></KeyRow>)}
  </KeyTable>
);
const Preferences = () => (
  <Window x={13} y={383} w={481} h={578} title="Window Manager" square>
    <Banner><Icon name="wm" size={48} /><BannerTitle>Window Manager Preferences</BannerTitle></Banner>
    <Tabs><Tab $w={42}>Style</Tab><Tab $w={73} $on>Keyboard</Tab><Tab $w={47}>Focus</Tab><Tab $w={75}>Advanced</Tab></Tabs>
    <Sheet>
      <Themes><Theme>Default</Theme></Themes>
      <Keys>
        <Heading $h={27}>Window shortcuts</Heading>
        <TableBox $h={132}><KeyList first={248} rows={winKeys} cut /><Scroll thumb={20} /></TableBox>
        <Under><Scroll horizontal thumb={207} /></Under>
        <Heading $h={44} $top={17}>Command shortcuts</Heading>
        <TableBox $h={151}><KeyList first={77} rows={cmdKeys} /><Scroll thumb={63} /></TableBox>
      </Keys>
    </Sheet>
    <Actions>
      <PushButton><Icon name="buoy" size={20} /><span><U>H</U>elp</span></PushButton>
      <PushButton><Icon name="cross" size={20} /><span><U>C</U>lose</span></PushButton>
    </Actions>
  </Window>
);

/* ---------- file manager ---------- */
const MenuLine = styled.div`display: flex; justify-content: space-between; height: 26px; line-height: 26px; padding: 0 4px 0 12px; flex: none;`;
const Transport = styled.div`display: flex;`;
const TransportBtn = styled.div`
  width: ${p => p.$w}px; height: 26px; display: grid; place-items: center; background: linear-gradient(#fff, #efefef); border: 1px solid ${line};
`;
const Dot = styled.span`width: 2px; height: 2px; background: #000;`;
const HandleBtn = styled.div`width: 13px; height: 34px; display: grid; place-items: center; border: 1px solid ${line}; background: ${raised}; flex: none;`;
const FmBody = styled.div`display: flex; flex: none; height: 556px;`;
const SideBar = styled.div`width: 38px; padding-left: 4px; flex: none;`;
const LeftPane = styled(Sunken)`width: 352px; padding: 0 1px; border-top-color: #c4c4c8; flex: none;`;
const RightPane = styled(Sunken)`width: 327px; height: 537px; padding: 0 1px; border-top-color: #c4c4c8; flex: none;`;
const RightRows = styled.div`overflow: hidden;`;
const RightWrap = styled.div`display: flex; flex-direction: column; gap: 3px;`;
const TreeRow = styled.div`
  display: grid; grid-template-columns: ${p => p.$wide ? "77px 100px 72px 74px" : "77px 1fr"}; height: 26px; line-height: 25px; white-space: pre;
  color: ${p => p.$sel ? "#fff" : p.$tone || "#000"}; background: ${p => p.$sel ? "#64738f" : "transparent"};
  outline: ${p => p.$sel ? "1px dotted #000" : "none"}; outline-offset: -1px;
`;
const Clip = styled.span`overflow: hidden;`;
const Lead = styled.span`display: flex; align-items: center; padding-left: ${p => p.$deep ? 32 : 16}px;`;
const Expander = styled.svg`margin-right: 6px;`;
const Twist = ({ open }) => (
  <Expander width="8" height="10" viewBox="0 0 8 10">
    {open
      ? <path d="M.5 3h8l-4 4z" fill="#fff" stroke="#000" strokeWidth=".9" />
      : <path d="M1 .8l4.500 4.400l-4.500 4.400z" fill="#fff" stroke="#000" strokeWidth=".9" />}
  </Expander>
);
const IconHead = styled(HeadCell)`display: flex; justify-content: flex-end; align-items: center; padding: 0 4px;`;
const DotHead = styled(HeadCell)`display: grid; place-items: center; padding: 0;`;
const navy = "#00007c", teal = "#0a6868";
const places = [
  ["homeFolder", "testing", 0, "", navy], ["book", "Book", 0], ["frequent", "Frequent", 0], ["drive", "Fstab", 0, "", null, true],
  ["drive", "/", 1, "d", teal], ["disc", "/mnt/cdrom", 1, "r", teal], ["screen", "/mnt/dumbbell", 1, "r", teal], ["floppy", "/mnt/floppy", 1, "r", teal],
  ["drive", "/mnt/graveur", 1, "r", teal], ["drive", "/home", 1, "rd", teal], ["screen", "/mnt/orionis", 1, "r", teal], ["ram", "/proc", 1, "rd", teal],
  ["ram", "/dev/shm", 1, "d", teal], ["drive", "/tmp", 1, "d", teal], ["drive", "/mnt/usb_key", 1, "r", teal], ["drive", "/usr", 1, "rd", teal],
  ["drive", "/var", 1, "rd", teal], ["recent", "Recent", 0], ["smb", "SMB Network", 0], ["trash", "Trash", 0],
];
const files = [
  ["bin", "83 files", "Oct 24 14:35", "r"], ["boot", "14 files", "Oct 31 23:21", "r"], ["crypt", "0 files", "Jan  1  1970", "l"],
  ["dev", "1679 files", "Nov 14 10:44", "r"], ["etc", "365 files", "Nov 14 10:44", "r"], ["home", "4 files", "Nov  7 16:15", "rd"],
  ["initrd", "0 files", "Aug 21  2003", "r"], ["lib", "108 files", "Oct 24 15:12", "r"], ["lost+found", "", "Feb  6  2003", "r", "stop"],
  ["mnt", "6 files", "May  4  2004", "r"], ["no-backup", "", "Jul 15 22:46", "r", "stop"], ["opt", "0 files", "Mar 29  2004", "rl"],
  ["proc", "196 files", "Nov 14 11:44", "rd"], ["root", "", "Nov 13 22:21", "r", "stop"], ["sbin", "136 files", "Oct 24 14:35", "r"],
  ["sys", "0 files", "Jan 20  2004", "r"], ["tmp", "15 files", "Nov 14 23:56", "d"], ["usr", "21 files", "Nov 10 02:11", "rd"], ["var", "16 files", "May 16  2004", "d"],
];
const play = {
  next: <><path d="M1 2l10 6l-10 6z" /><path d="M12.500 2h3v12h-3z" /></>,
  pause: <path d="M1.500 2h5v12h-5zM9 2h5v12h-5z" />,
  prev: <><path d="M15 2l-10 6l10 6z" /><path d="M.5 2h3v12h-3z" /></>,
};
const Play = styled.svg`fill: #43a047; stroke: #143c18; stroke-width: 1;`;
const StatusLine = styled.div`display: flex; align-items: flex-start; padding: 0 5px 0 4px;`;
const Progress = styled.div`width: 149px; height: 27px; margin-right: 4px; background: #d0d5e0; border: 1px solid #8e909c; box-shadow: inset 1px 1px #b8bcc8, inset -1px -1px #eef;`;
const StatusText = styled.div`
  width: 557px; height: 29px; margin-top: -1px; padding-left: 4px; display: flex; gap: 8px; background: #fff; line-height: 39px;
`;
const StatusEnd = styled.div`padding: 4px 0 0 7px;`;
const BottomGrip = styled.div`
  height: 8px; flex: none; display: flex; align-items: center; padding-left: 385px;
  &::after { content: ""; width: 9px; height: 4px; background: repeating-linear-gradient(90deg, #aaa 0 1px, #f8f8f8 1px 2px); }
`;
const VScrollWrap = styled.div`height: 536px; display: flex; padding-left: 3px;`;
const FileManager = () => (
  <Window x={511} y={275} w={749} h={682} title="//cassiopea/" active>
    <MenuLine>
      <span>Main menu</span>
      <Transport>
        {["next", "pause", "prev"].map(k => <TransportBtn key={k} $w={26}><Play width="16" height="16">{play[k]}</Play></TransportBtn>)}
        <TransportBtn $w={13}><Dot /></TransportBtn>
      </Transport>
    </MenuLine>
    <Tools $pad={4}>
      <HandleBtn><Dot /></HandleBtn>
      <ToolRow names={["termDrop", "gearDrop", "homeDrop", "wrenchDrop", "|", "scissors", "copy", "pasteOff", "trash", "wrenchBox", "printDrop", "|", "sync", "power"]} />
    </Tools>
    <Gap $h={1} />
    <FmBody>
      <SideBar>
        {["print", "stack", "goto", "list", "saveEdit", "ballRed", "ballGreen"].map(n => <Slot key={n}><Icon name={n} /></Slot>)}
      </SideBar>
      <LeftPane>
        <HeadStrip>
          <DotHead $w={13}><Dot /></DotHead><IconHead $w={60}><Icon name="driveDrop" size={16} /></IconHead><HeadCell $pad={4}>Name</HeadCell>
        </HeadStrip>
        {places.map(([icon, name, deep, marks, tone, open]) => (
          <TreeRow key={name} $tone={tone}><Lead $deep={deep}><Twist open={open} /><TreeIcon name={icon} marks={marks} /></Lead><span>{name}</span></TreeRow>
        ))}
      </LeftPane>
      <Grip />
      <RightWrap>
        <RightPane>
          <HeadStrip>
            <DotHead $w={13}><Dot /></DotHead><IconHead $w={60}><Icon name="driveDrop" size={16} /></IconHead>
            <HeadCell $pad={4} $w={100}>Name</HeadCell><HeadCell $pad={4} $w={72}>Size</HeadCell><HeadCell $pad={4} $cut>Date</HeadCell>
          </HeadStrip>
          <RightRows>
            <TreeRow $wide $sel><Lead><Twist open /><TreeIcon name="open" marks="td" /></Lead><span>/</span><span>22 files</span><Clip>Nov  1 09:11</Clip></TreeRow>
            {files.map(([name, size, date, marks, icon]) => (
              <TreeRow key={name} $wide><Lead $deep><Twist /><TreeIcon name={icon || "folder"} marks={marks} /></Lead><span>{name}</span><span>{size}</span><Clip>{date}</Clip></TreeRow>
            ))}
          </RightRows>
        </RightPane>
        <Scroll horizontal thumb={181} />
      </RightWrap>
      <VScrollWrap><Scroll thumb={470} /></VScrollWrap>
    </FmBody>
    <BottomGrip />
    <StatusLine>
      <Progress /><StatusText><Icon name="open" />{"/ (22 files, 1 MB. 2 hidden.)"}</StatusText>
      <StatusEnd><Icon name="eraser" size={18} /></StatusEnd>
    </StatusLine>
  </Window>
);

/* ---------- panels ---------- */
const Panel = styled.footer`
  position: absolute; left: ${p => p.$x}px; top: ${p => p.$y}px; width: ${p => p.$w}px; height: ${p => p.$h}px;
  display: flex; align-items: center; background: rgba(232, 234, 240, .84);
  border: 1px solid; border-color: #eef2fa #a4aabb #a4aabb #eef2fa;
`;
const Dots = styled.div`
  flex: none; width: 4px; height: ${p => p.$h}px; margin: 0 ${p => p.$r || 0}px 0 ${p => p.$l || 0}px;
  background: repeating-linear-gradient(transparent 0 1px, #a0a4b0 1px 4px, transparent 4px 6px);
  box-shadow: inset -1px 0 #eef;
`;
const Launch = styled.div`width: ${p => p.$w}px; display: grid; place-items: center; flex: none; opacity: .88;`;
const PanelBar = styled.div`width: 1px; height: 26px; background: #a0a6b4; margin: 0 ${p => p.$r}px 0 ${p => p.$l}px; flex: none;`;
const Pager = styled.div`display: flex; gap: 1px; height: 32px; flex: none;`;
const Desk = styled.div`width: 40px; background: ${p => p.$on ? "#8f9db5" : "#a6aab6"};`;
const Clock = styled.div`font: bold 15px/32px "DejaVu Sans Mono", monospace; width: 48px; word-spacing: -2px; letter-spacing: -.4px; color: #23252c; flex: none;`;
const Pop = () => <svg width="8" height="8"><path d="M0 6l4 -4l4 4z" fill="#b0b4c0" /></svg>;
const DeskMap = () => (
  <svg width="40" height="32" viewBox="0 0 40 32">
    <g fill="#c8cfdc" stroke="#20242c">
      <path d="M1 4.500h18v12h-18zM1 16.500h13v15h-13zM24 4.500h13v8h-13z" /><rect x="16" y="11.500" width="22.500" height="19" />
    </g>
    <g transform="translate(19 14) scale(.66)"><FolderShape /></g>
  </svg>
);
const Panels = () => (
  <>
    <Panel $x={329} $y={986} $w={622} $h={38}>
      <Dots $h={28} $l={4} $r={7} />
      <Launch $w={26}><Icon name="term" /></Launch>
      <Launch $w={41}><Icon name="folder" size={24} /></Launch>
      <Launch $w={10}><Pop /></Launch>
      <Launch $w={38}><Icon name="globe" /></Launch>
      <Launch $w={30}><Icon name="mail" /></Launch>
      <Launch $w={39}><Icon name="music" /></Launch>
      <PanelBar $l={1} $r={5} />
      <Pager><Desk /><Desk $on><DeskMap /></Desk><Desk /><Desk /></Pager>
      <PanelBar $l={4} $r={4} />
      <Launch $w={34}><Icon name="tools" /></Launch>
      <Launch $w={34}><Icon name="print" /></Launch>
      <Launch $w={14}><Pop /></Launch>
      <Launch $w={38}><Icon name="buoy" /></Launch>
      <PanelBar $l={0} $r={4} />
      <Launch $w={26}><Icon name="lock" size={16} /></Launch>
      <Launch $w={26}><Icon name="powerSmall" size={16} /></Launch>
      <PanelBar $l={4} $r={6} />
      <Clock>23 56</Clock>
      <Dots $h={28} />
    </Panel>
    <Panel $x={1104} $y={982} $w={180} $h={42}>
      <Dots $h={34} $l={4} $r={4} />
      <Launch $w={38}><Icon name="finder" size={28} /></Launch>
      <Launch $w={38}><Icon name="folder" size={28} /></Launch>
      <Launch $w={38}><Icon name="editor" size={28} /></Launch>
      <Launch $w={38}><Icon name="wm" size={28} /></Launch>
      <Dots $h={34} $l={2} />
    </Panel>
  </>
);

export default function App() {
  return (
    <>
      <Global />
      <Defs />
      <Desktop>
        <Wallpaper />
        <TaskBar>
          <Task><Icon name="wm" size={16} /><TaskText>Window Manager</TaskText></Task>
          <Task><Icon name="finder" size={16} /><TaskText>Xfce4 Appfinder</TaskText></Task>
          <Task $on><Icon name="folder" size={16} /><TaskText $on>//cassiopea/</TaskText></Task>
          <Task><Icon name="menued" size={16} /><TaskText>Xfce4-MenuEditor - /home/testing</TaskText></Task>
          <Spring />
          <TrayIcon><Icon name="calendar" size={16} /></TrayIcon>
        </TaskBar>
        <Appfinder />
        <MenuEditor />
        <FileManager />
        <Preferences />
        <Panels />
      </Desktop>
    </>
  );
}
